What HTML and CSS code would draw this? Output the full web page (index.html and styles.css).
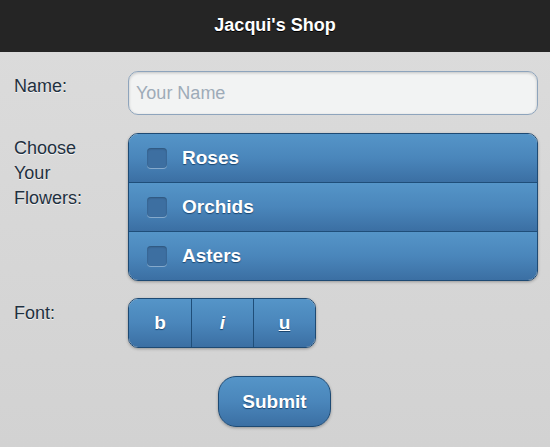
FILE: index.html
```html
<!DOCTYPE html>
<html>
<head>
<meta charset="utf-8">
<title>Jacqui's Shop</title>
<link rel="stylesheet" href="styles.css">
</head>
<body>
<header class="bar"><h1 class="title">Jacqui's Shop</h1></header>
<form class="form">
  <div class="row">
    <label class="lbl" for="name">Name:</label>
    <input class="text" id="name" type="text" placeholder="Your Name">
  </div>
  <div class="row">
    <div class="lbl">Choose<br>Your<br>Flowers:</div>
    <div class="group vgroup">
      <label class="btn check"><span class="box"></span>Roses</label>
      <label class="btn check"><span class="box"></span>Orchids</label>
      <label class="btn check"><span class="box"></span>Asters</label>
    </div>
  </div>
  <div class="row">
    <div class="lbl">Font:</div>
    <div class="group hgroup">
      <span class="btn seg">b</span>
      <span class="btn seg it">i</span>
      <span class="btn seg ul">u</span>
    </div>
  </div>
  <div class="actions">
    <button class="btn submit" type="button">Submit</button>
  </div>
</form>
</body>
</html>
```
FILE: styles.css
```css
html, body {
  margin: 0;
  height: 100%;
}
body {
  font-family: "Liberation Sans", Arial, sans-serif;
  background: linear-gradient(#dcdcdc, #d2d2d2);
  color: #1f2f3f;
}
.bar {
  height: 52px;
  background: #252525;
  display: flex;
  align-items: center;
  justify-content: center;
}
.title {
  margin: 0 0 2px;
  font-size: 18px;
  font-weight: bold;
  color: #fff;
  text-shadow: 0 1px 0 #000;
}
.form {
  padding: 19px 12px 0 14px;
  display: flex;
  flex-direction: column;
  gap: 18px;
}
.row {
  display: flex;
  align-items: flex-start;
}
.row + .row + .row { margin-top: -1px; }
.lbl {
  width: 114px;
  flex: none;
  font-size: 18px;
  line-height: 25px;
  padding-top: 3px;
  color: #1f3040;
  text-shadow: 0 1px 0 #f4f4f4;
}
.text {
  flex: 1;
  box-sizing: border-box;
  height: 44px;
  margin: 0;
  padding: 0 7px;
  border: 1px solid #8ea4bc;
  border-radius: 10px;
  background: #f2f3f3;
  font: 18px "Liberation Sans", Arial, sans-serif;
  color: #333;
  box-shadow: inset 0 1px 3px rgba(0,0,0,0.2);
}
.text::placeholder { color: #9eabb8; }
.group {
  border: 1px solid #1e4a73;
  border-radius: 10px;
  overflow: hidden;
  box-shadow: 0 1px 3px rgba(0,0,0,0.3);
}
.vgroup {
  flex: 1;
  display: flex;
  flex-direction: column;
}
.btn {
  background: linear-gradient(#5595c8, #4a86bb 50%, #3b6fa3);
  color: #fff;
  font-weight: bold;
  font-size: 19px;
  text-shadow: 0 1px 1px #1b4670;
}
.check {
  height: 48px;
  display: flex;
  align-items: center;
  padding-left: 18px;
  border-top: 1px solid #1f4e79;
}
.check:first-child { border-top: 0; }
.box {
  width: 20px;
  height: 20px;
  margin-right: 15px;
  border-radius: 4px;
  background: #3d6fa1;
  box-shadow: inset 0 1px 2px rgba(0,0,0,0.25), 0 1px 0 rgba(255,255,255,0.35);
}
.hgroup {
  display: flex;
}
.seg {
  width: 61px;
  height: 48px;
  display: flex;
  align-items: center;
  justify-content: center;
  border-left: 1px solid #1f4e79;
}
.seg:first-child { border-left: 0; width: 62px; }
.it { font-style: italic; }
.ul { text-decoration: underline; }
.actions {
  display: flex;
  justify-content: center;
  padding-top: 10px;
  padding-right: 3px;
}
.submit {
  width: 113px;
  height: 51px;
  border: 1px solid #1e4a73;
  border-radius: 18px;
  font-family: "Liberation Sans", Arial, sans-serif;
  box-shadow: 0 1px 3px rgba(0,0,0,0.3);
  padding: 0;
}
```
